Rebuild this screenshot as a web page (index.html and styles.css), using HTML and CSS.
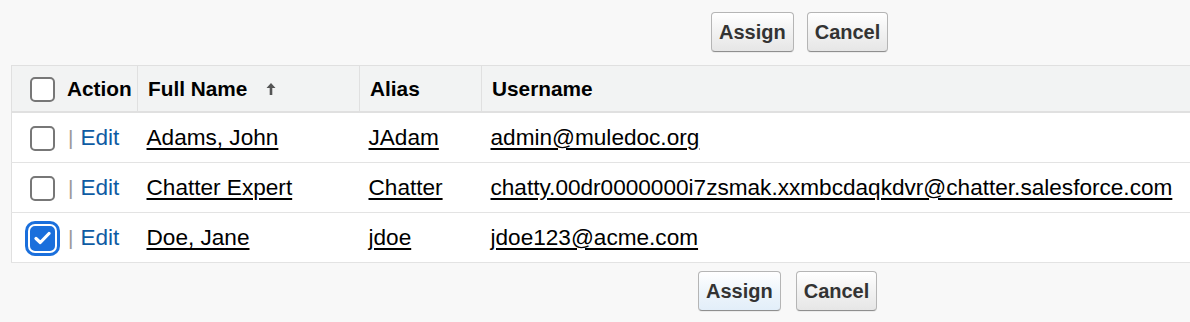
FILE: index.html
```html
<!DOCTYPE html>
<html>
<head>
<meta charset="utf-8">
<link rel="stylesheet" href="styles.css">
</head>
<body>
<div class="btnrow top">
  <button class="btn">Assign</button>
  <button class="btn">Cancel</button>
</div>
<table class="list">
  <colgroup>
    <col class="c1"><col class="c2"><col class="c3"><col class="c4">
  </colgroup>
  <thead>
    <tr>
      <th class="actcol"><span class="cb"></span><span class="hact">Action</span></th>
      <th>Full Name <svg class="sort" width="10" height="12" viewBox="0 0 10 12"><path d="M5 0 L9.5 5 L6.3 5 L6.3 12 L3.7 12 L3.7 5 L0.5 5 Z" fill="#555"/></svg></th>
      <th>Alias</th>
      <th>Username</th>
    </tr>
  </thead>
  <tbody>
    <tr>
      <td class="actcol"><span class="cb"></span><span class="sep">|</span><a class="edit">Edit</a></td>
      <td><a class="lnk">Adams, John</a></td>
      <td><a class="lnk">JAdam</a></td>
      <td><a class="lnk">admin@muledoc.org</a></td>
    </tr>
    <tr>
      <td class="actcol"><span class="cb"></span><span class="sep">|</span><a class="edit">Edit</a></td>
      <td><a class="lnk">Chatter Expert</a></td>
      <td><a class="lnk">Chatter</a></td>
      <td><a class="lnk">chatty.00dr0000000i7zsmak.xxmbcdaqkdvr@chatter.salesforce.com</a></td>
    </tr>
    <tr>
      <td class="actcol"><span class="cb checked"><svg width="17" height="14" viewBox="0 0 17 14"><path d="M2 7.5 L6.3 11.5 L15 2.5" fill="none" stroke="#fff" stroke-width="3.2" stroke-linecap="round" stroke-linejoin="round"/></svg></span><span class="sep">|</span><a class="edit">Edit</a></td>
      <td><a class="lnk">Doe, Jane</a></td>
      <td><a class="lnk">jdoe</a></td>
      <td><a class="lnk">jdoe123@acme.com</a></td>
    </tr>
  </tbody>
</table>
<div class="btnrow bottom">
  <button class="btn focus">Assign</button>
  <button class="btn">Cancel</button>
</div>
</body>
</html>
```

FILE: styles.css
```css
html, body {
  margin: 0;
  padding: 0;
}
body {
  background: #f8f8f8;
  font-family: "Liberation Sans", Arial, Helvetica, sans-serif;
  color: #000;
  width: 1190px;
  height: 322px;
  overflow: hidden;
}
.btnrow {
  display: flex;
  gap: 13px;
}
.btnrow.top {
  padding: 12px 0 0 711px;
  height: 65px;
  box-sizing: border-box;
}
.btnrow.bottom {
  padding: 8px 0 0 698px;
  gap: 15px;
}
.btn {
  height: 40px;
  box-sizing: border-box;
  padding: 0 7px;
  font-family: "Liberation Sans", Arial, Helvetica, sans-serif;
  font-weight: bold;
  font-size: 20px;
  color: #333;
  border: 1px solid #b5b5b5;
  border-bottom-color: #8f8f8f;
  border-radius: 4px;
  background: linear-gradient(#ffffff, #f4f4f4 40%, #e6e6e6);
  box-shadow: 0 1px 0 rgba(0,0,0,0.05);
}
.btn.focus {
  background: linear-gradient(#ffffff, #eef5fb 50%, #e2eef9);
}
.list {
  margin-left: 11px;
  width: 1400px;
  border-collapse: collapse;
  table-layout: fixed;
  background: #fff;
  border-left: 1px solid #e0e0e0;
  border-top: 1px solid #e0e0e0;
}
.c1 { width: 126px; }
.c2 { width: 222px; }
.c3 { width: 122px; }
.list th {
  background: #f2f3f3;
  height: 45px;
  padding: 0 0 0 10px;
  text-align: left;
  font-size: 20.8px;
  font-weight: bold;
  color: #000;
  border-left: 1px solid #e0e0e0;
  border-bottom: 2px solid #e0e0e0;
  white-space: nowrap;
}
.list th:first-child { border-left: none; }
.list th.actcol { padding-left: 18px; }
.list th .hact { margin-left: 12px; vertical-align: middle; }
.sort { margin-left: 13px; vertical-align: 1px; }
.list td {
  height: 49px;
  padding: 0 0 0 9px;
  font-size: 22.6px;
  border-bottom: 1px solid #e3e3e3;
  white-space: nowrap;
}
.list td.actcol { padding-left: 18px; }
.cb {
  display: inline-flex;
  align-items: center;
  justify-content: center;
  width: 25px;
  height: 25px;
  box-sizing: border-box;
  border: 2px solid #777;
  border-radius: 5px;
  background: #fff;
  vertical-align: middle;
}
.cb.checked {
  background: #1a6fdc;
  border-color: #1a6fdc;
  box-shadow: 0 0 0 2px #fff, 0 0 0 5px #1a6fdc;
}
.sep {
  color: #999;
  font-size: 21px;
  margin: 0 7px 0 13px;
  vertical-align: middle;
}
.edit {
  color: #0e5ba3;
  vertical-align: middle;
}
.lnk {
  color: #000;
  text-decoration: underline;
  text-decoration-thickness: 1.5px;
  text-underline-offset: 3px;
}
```
